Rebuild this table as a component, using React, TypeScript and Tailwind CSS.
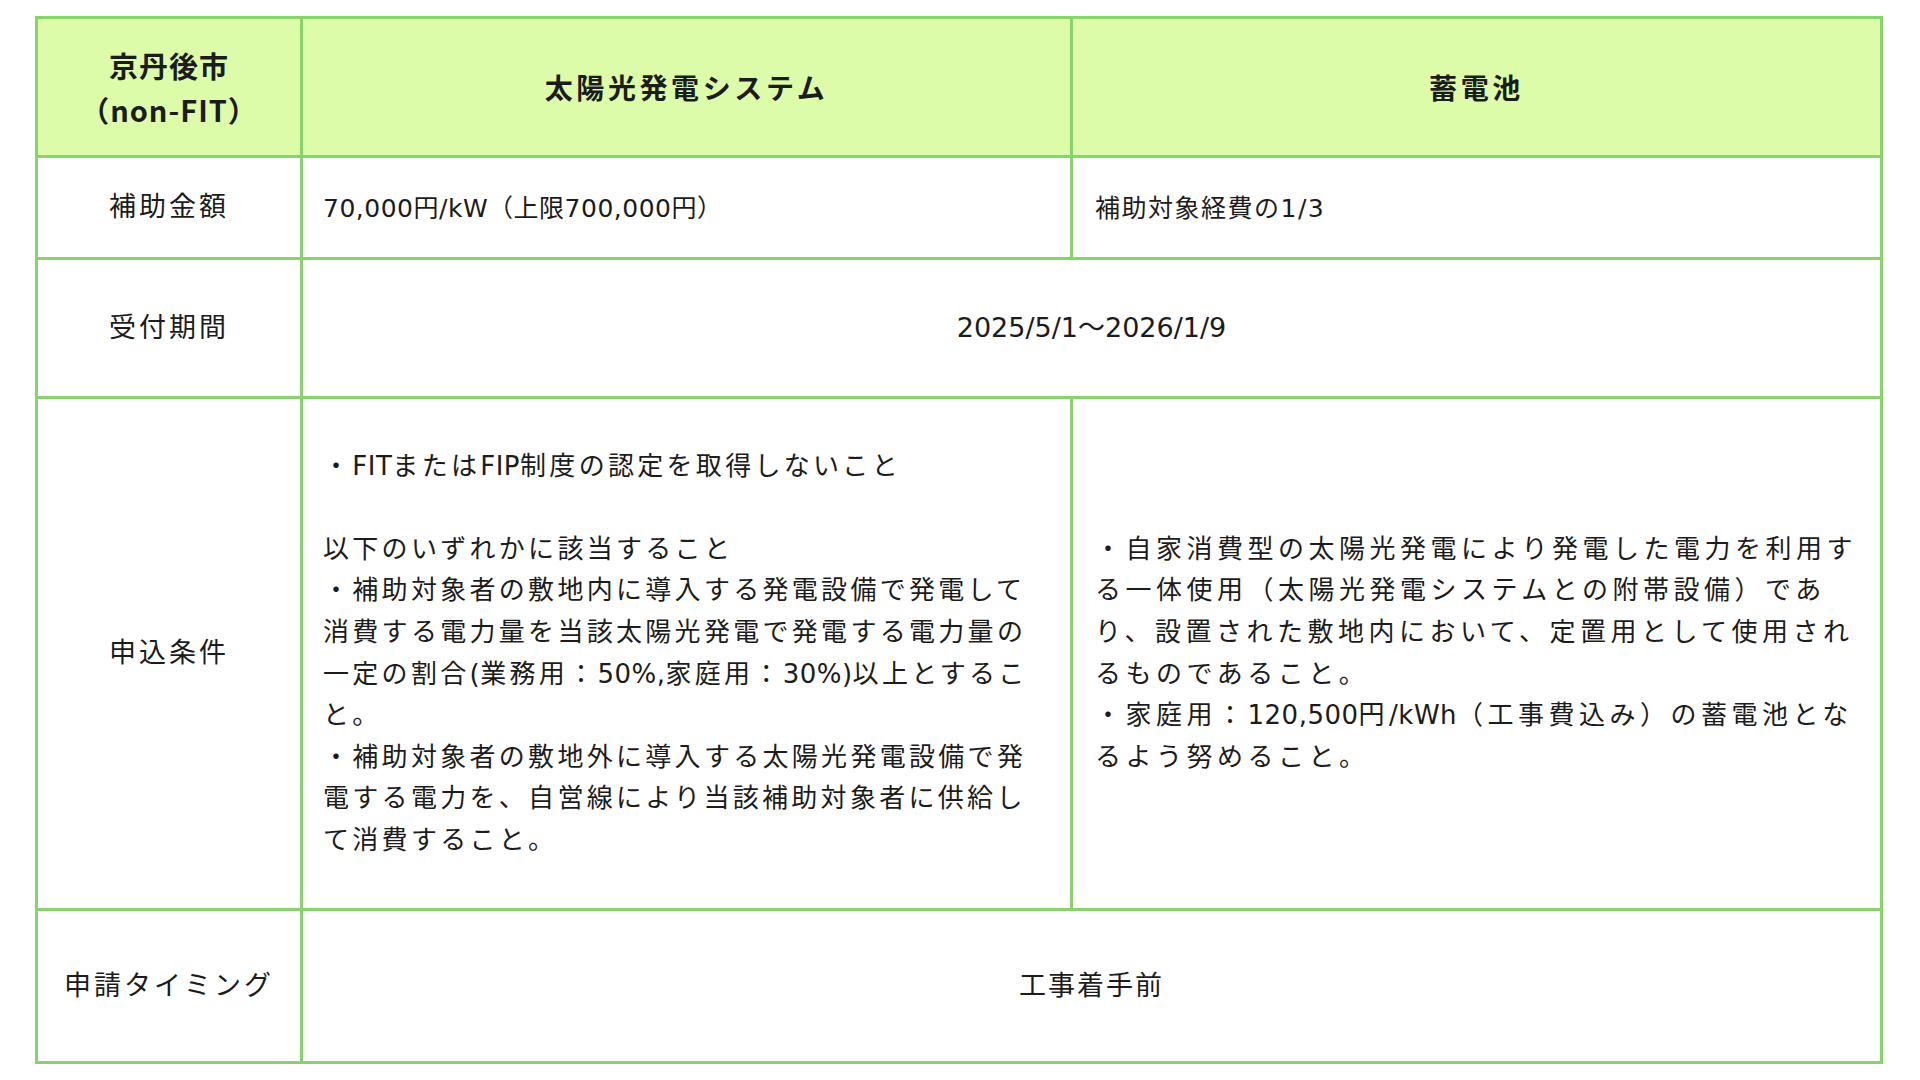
import React from 'react';

const solarLines = [
  '・FITまたはFIP制度の認定を取得しないこと',
  '',
  '以下のいずれかに該当すること',
  '・補助対象者の敷地内に導入する発電設備で発電して',
  '消費する電力量を当該太陽光発電で発電する電力量の',
  '一定の割合(業務用：50%,家庭用：30%)以上とするこ',
  'と。',
  '・補助対象者の敷地外に導入する太陽光発電設備で発',
  '電する電力を、自営線により当該補助対象者に供給し',
  'て消費すること。',
];

const batteryLines = [
  '・自家消費型の太陽光発電により発電した電力を利用す',
  'る一体使用（太陽光発電システムとの附帯設備）であ',
  'り、設置された敷地内において、定置用として使用され',
  'るものであること。',
  '・家庭用：120,500円/kWh（工事費込み）の蓄電池とな',
  'るよう努めること。',
];

// latin runs keep normal spacing, kana/kanji get the wide tracking
function Line({ text }: { text: string }) {
  const parts = text.split(/([A-Za-z0-9%,.()/]+)/);
  return (
    <div className="h-[41.6px] whitespace-nowrap leading-[41.6px]">
      {text === ''
        ? '\u00a0'
        : parts.map((p, i) =>
            i % 2 === 1 ? (
              <span key={i} className="tracking-[0.5px]">
                {p}
              </span>
            ) : (
              <React.Fragment key={i}>{p}</React.Fragment>
            ),
          )}
    </div>
  );
}

const cell = 'border-[3px] border-[#86d46b] align-middle';
const label = `${cell} text-center text-[27px] tracking-[3px]`;

export default function App() {
  return (
    <div className="min-h-screen bg-white pt-[16px] pl-[35px] font-['DejaVu_Sans','Noto_Sans_CJK_JP',sans-serif] text-[#1c1c1c]">
      <table className="w-[1848px] table-fixed border-collapse border-[3px] border-[#86d46b]">
        <colgroup>
          <col className="w-[265px]" />
          <col className="w-[770px]" />
          <col />
        </colgroup>
        <tbody>
          <tr className="h-[139px] bg-[#dcfcaa]">
            <th className={`${cell} pt-[3px] font-['Noto_Sans_CJK_JP',sans-serif] text-[29px] font-bold leading-[44px] tracking-[1px]`}>
              <div className="-mt-[4px]">京丹後市</div>
              <div>（non-FIT）</div>
            </th>
            <th className={`${cell} font-['Noto_Sans_CJK_JP',sans-serif] text-[28px] font-bold tracking-[3.6px]`}>
              太陽光発電システム
            </th>
            <th className={`${cell} font-['Noto_Sans_CJK_JP',sans-serif] text-[28px] font-bold tracking-[3.6px]`}>
              蓄電池
            </th>
          </tr>
          <tr className="h-[102px]">
            <td className={label}>補助金額</td>
            <td className={`${cell} pl-[20px] pt-[3px] text-[25px] tracking-[0.5px]`}>70,000円/kW（上限700,000円）</td>
            <td className={`${cell} pl-[22px] pt-[3px] text-[25px] tracking-[1.5px]`}>補助対象経費の1/3</td>
          </tr>
          <tr className="h-[139px]">
            <td className={label}>受付期間</td>
            <td colSpan={2} className={`${cell} text-center text-[27px]`}>
              2025/5/1～2026/1/9
            </td>
          </tr>
          <tr className="h-[512px]">
            <td className={label}>申込条件</td>
            <td className={`${cell} pl-[20px] text-[26px] tracking-[3.3px]`}>
              {solarLines.map((l, i) => (
                <Line key={i} text={l} />
              ))}
            </td>
            <td className={`${cell} pl-[22px] text-[26px] tracking-[4.5px]`}>
              {batteryLines.map((l, i) => (
                <Line key={i} text={l} />
              ))}
            </td>
          </tr>
          <tr className="h-[153px]">
            <td className={label}>申請タイミング</td>
            <td colSpan={2} className={`${cell} text-center text-[27px] tracking-[2px]`}>
              工事着手前
            </td>
          </tr>
        </tbody>
      </table>
    </div>
  );
}
